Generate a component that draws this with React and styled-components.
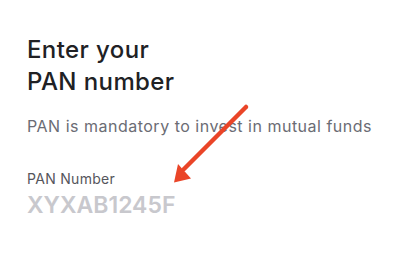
import React from 'react';
import styled, { createGlobalStyle } from 'styled-components';

const GlobalStyle = createGlobalStyle`
  html, body {
    margin: 0;
    padding: 0;
    background: #ffffff;
  }
  body {
    font-family: Inter, 'Noto Sans', sans-serif;
  }
`;

function App() {
  return (
    <>
      <GlobalStyle />
      <Screen>
        <Title>
          Enter your
          <br />
          PAN number
        </Title>
        <Subtitle>PAN is mandatory to invest in mutual funds</Subtitle>
        <Field>
          <Label>PAN Number</Label>
          <Value>XYXAB1245F</Value>
        </Field>
        <Arrow viewBox="0 0 400 254">
          <line x1="246" y1="107" x2="184" y2="169" stroke="#ea4528" strokeWidth="4.5" strokeLinecap="round" />
          <polygon points="174,182.5 178,164 191,178.5" fill="#ea4528" />
        </Arrow>
      </Screen>
    </>
  );
}

const Screen = styled.main`
  position: relative;
  width: 400px;
  height: 254px;
  padding: 34px 0 0 27px;
  box-sizing: border-box;
  overflow: hidden;
  background: #ffffff;
`;

const Title = styled.h1`
  margin: 0;
  font-size: 24px;
  line-height: 32px;
  font-weight: 500;
  color: #202124;
  letter-spacing: 0.4px;
`;

const Subtitle = styled.p`
  margin: 18px 0 0;
  font-size: 16px;
  line-height: 20px;
  font-weight: 400;
  color: #6b6c74;
  letter-spacing: 0.5px;
`;

const Field = styled.section`
  display: flex;
  flex-direction: column;
  gap: 4px;
  margin-top: 35px;
`;

const Label = styled.span`
  font-size: 14px;
  line-height: 16px;
  color: #55565c;
  letter-spacing: 0.3px;
`;

const Value = styled.span`
  font-size: 23px;
  line-height: 28px;
  font-weight: 600;
  color: #c8c8cd;
  letter-spacing: 0;
`;

const Arrow = styled.svg`
  position: absolute;
  left: 0;
  top: 0;
  width: 400px;
  height: 254px;
  pointer-events: none;
`;

export default App;
